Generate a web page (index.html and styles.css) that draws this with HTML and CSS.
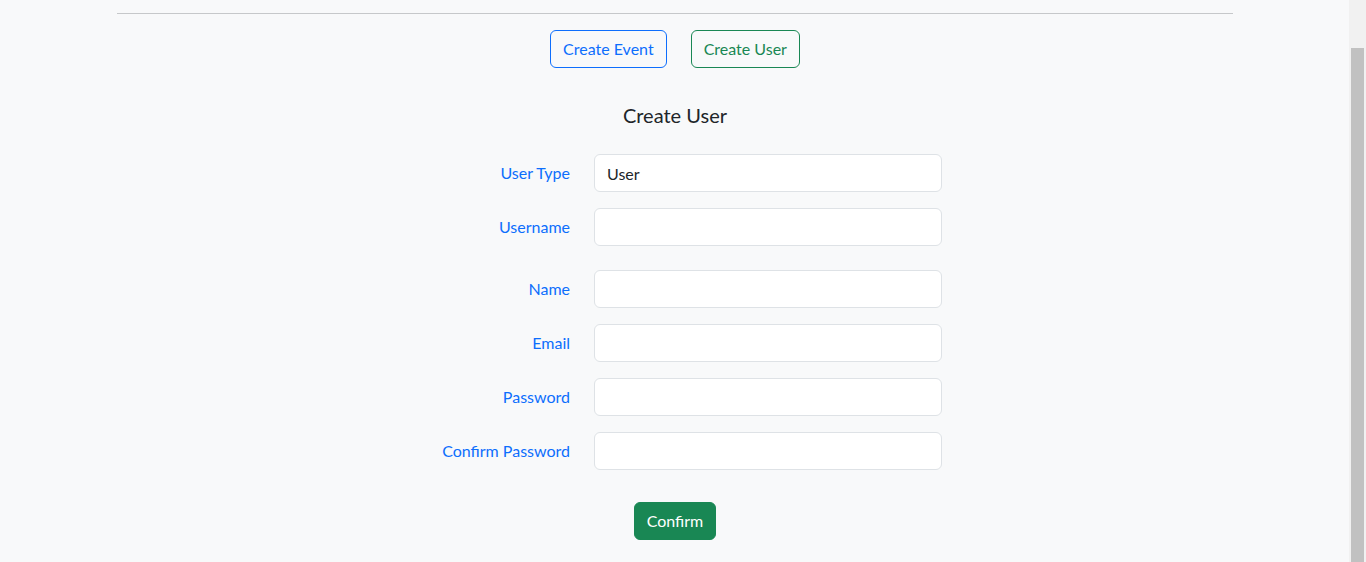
FILE: index.html
```html
<!DOCTYPE html>
<html lang="en">
<head>
<meta charset="utf-8">
<title>Create User</title>
<link rel="stylesheet" href="styles.css">
</head>
<body>
<main class="container">
  <hr class="divider">
  <nav class="switcher">
    <button type="button" class="btn btn-outline-primary">Create Event</button>
    <button type="button" class="btn btn-outline-success">Create User</button>
  </nav>
  <h5 class="form-title">Create User</h5>
  <form class="user-form">
    <div class="field"><label for="type">User Type</label><input id="type" class="control" value="User"></div>
    <div class="field field-wide"><label for="username">Username</label><input id="username" class="control"></div>
    <div class="field"><label for="name">Name</label><input id="name" class="control"></div>
    <div class="field"><label for="email">Email</label><input id="email" class="control" type="email"></div>
    <div class="field"><label for="password">Password</label><input id="password" class="control" type="password"></div>
    <div class="field"><label for="confirm">Confirm Password</label><input id="confirm" class="control" type="password"></div>
    <div class="actions"><button type="button" class="btn btn-success">Confirm</button></div>
  </form>
</main>
<aside class="scrollbar" aria-hidden="true"><div class="scrollbar-thumb"></div></aside>
</body>
</html>
```

FILE: styles.css
```css
* { box-sizing: border-box; }
html, body { margin: 0; }
body {
  background: #f8f9fa;
  color: #212529;
  font-family: "Segoe UI", Lato, "Liberation Sans", sans-serif;
  font-size: 16px;
  line-height: 24px;
  padding-right: 16px;
  overflow: hidden;
}
.container {
  width: 1116px;
  margin: 0 auto;
  padding-top: 13px;
}
.divider {
  margin: 0;
  border: 0;
  border-top: 1px solid #c6c8ca;
}
.switcher {
  margin-top: 16px;
  display: flex;
  justify-content: center;
  gap: 24px;
}
.btn {
  font: inherit;
  font-size: 16px;
  line-height: 24px;
  padding: 6px 12px;
  border: 1px solid transparent;
  border-radius: 6px;
  background: transparent;
  cursor: pointer;
}
.btn-outline-primary { color: #0d6efd; border-color: #0d6efd; }
.btn-outline-success { color: #198754; border-color: #198754; }
.btn-success { color: #fff; background: #198754; border-color: #198754; }
.form-title {
  margin: 35px 0 27px;
  text-align: center;
  font-size: 20px;
  font-weight: 400;
  line-height: 24px;
}
.user-form {
  width: 534px;
  margin: 0 auto;
}
.field {
  display: grid;
  grid-template-columns: 162px 348px;
  column-gap: 24px;
  align-items: center;
  margin-bottom: 16px;
}
.field-wide { margin-bottom: 24px; }
.field label {
  text-align: right;
  color: #0d6efd;
}
.control {
  font: inherit;
  color: #212529;
  height: 38px;
  padding: 6px 12px;
  border: 1px solid #dee2e6;
  border-radius: 6px;
  background: #fff;
  width: 100%;
}
.actions {
  margin-top: 32px;
  display: flex;
  justify-content: center;
}
.scrollbar {
  position: fixed;
  top: 0;
  right: 0;
  bottom: 0;
  width: 17px;
  background: #f1f1f1;
  padding: 48px 2px 0 2px;
}
.scrollbar-thumb {
  height: 100%;
  background: #c1c1c1;
}
```
